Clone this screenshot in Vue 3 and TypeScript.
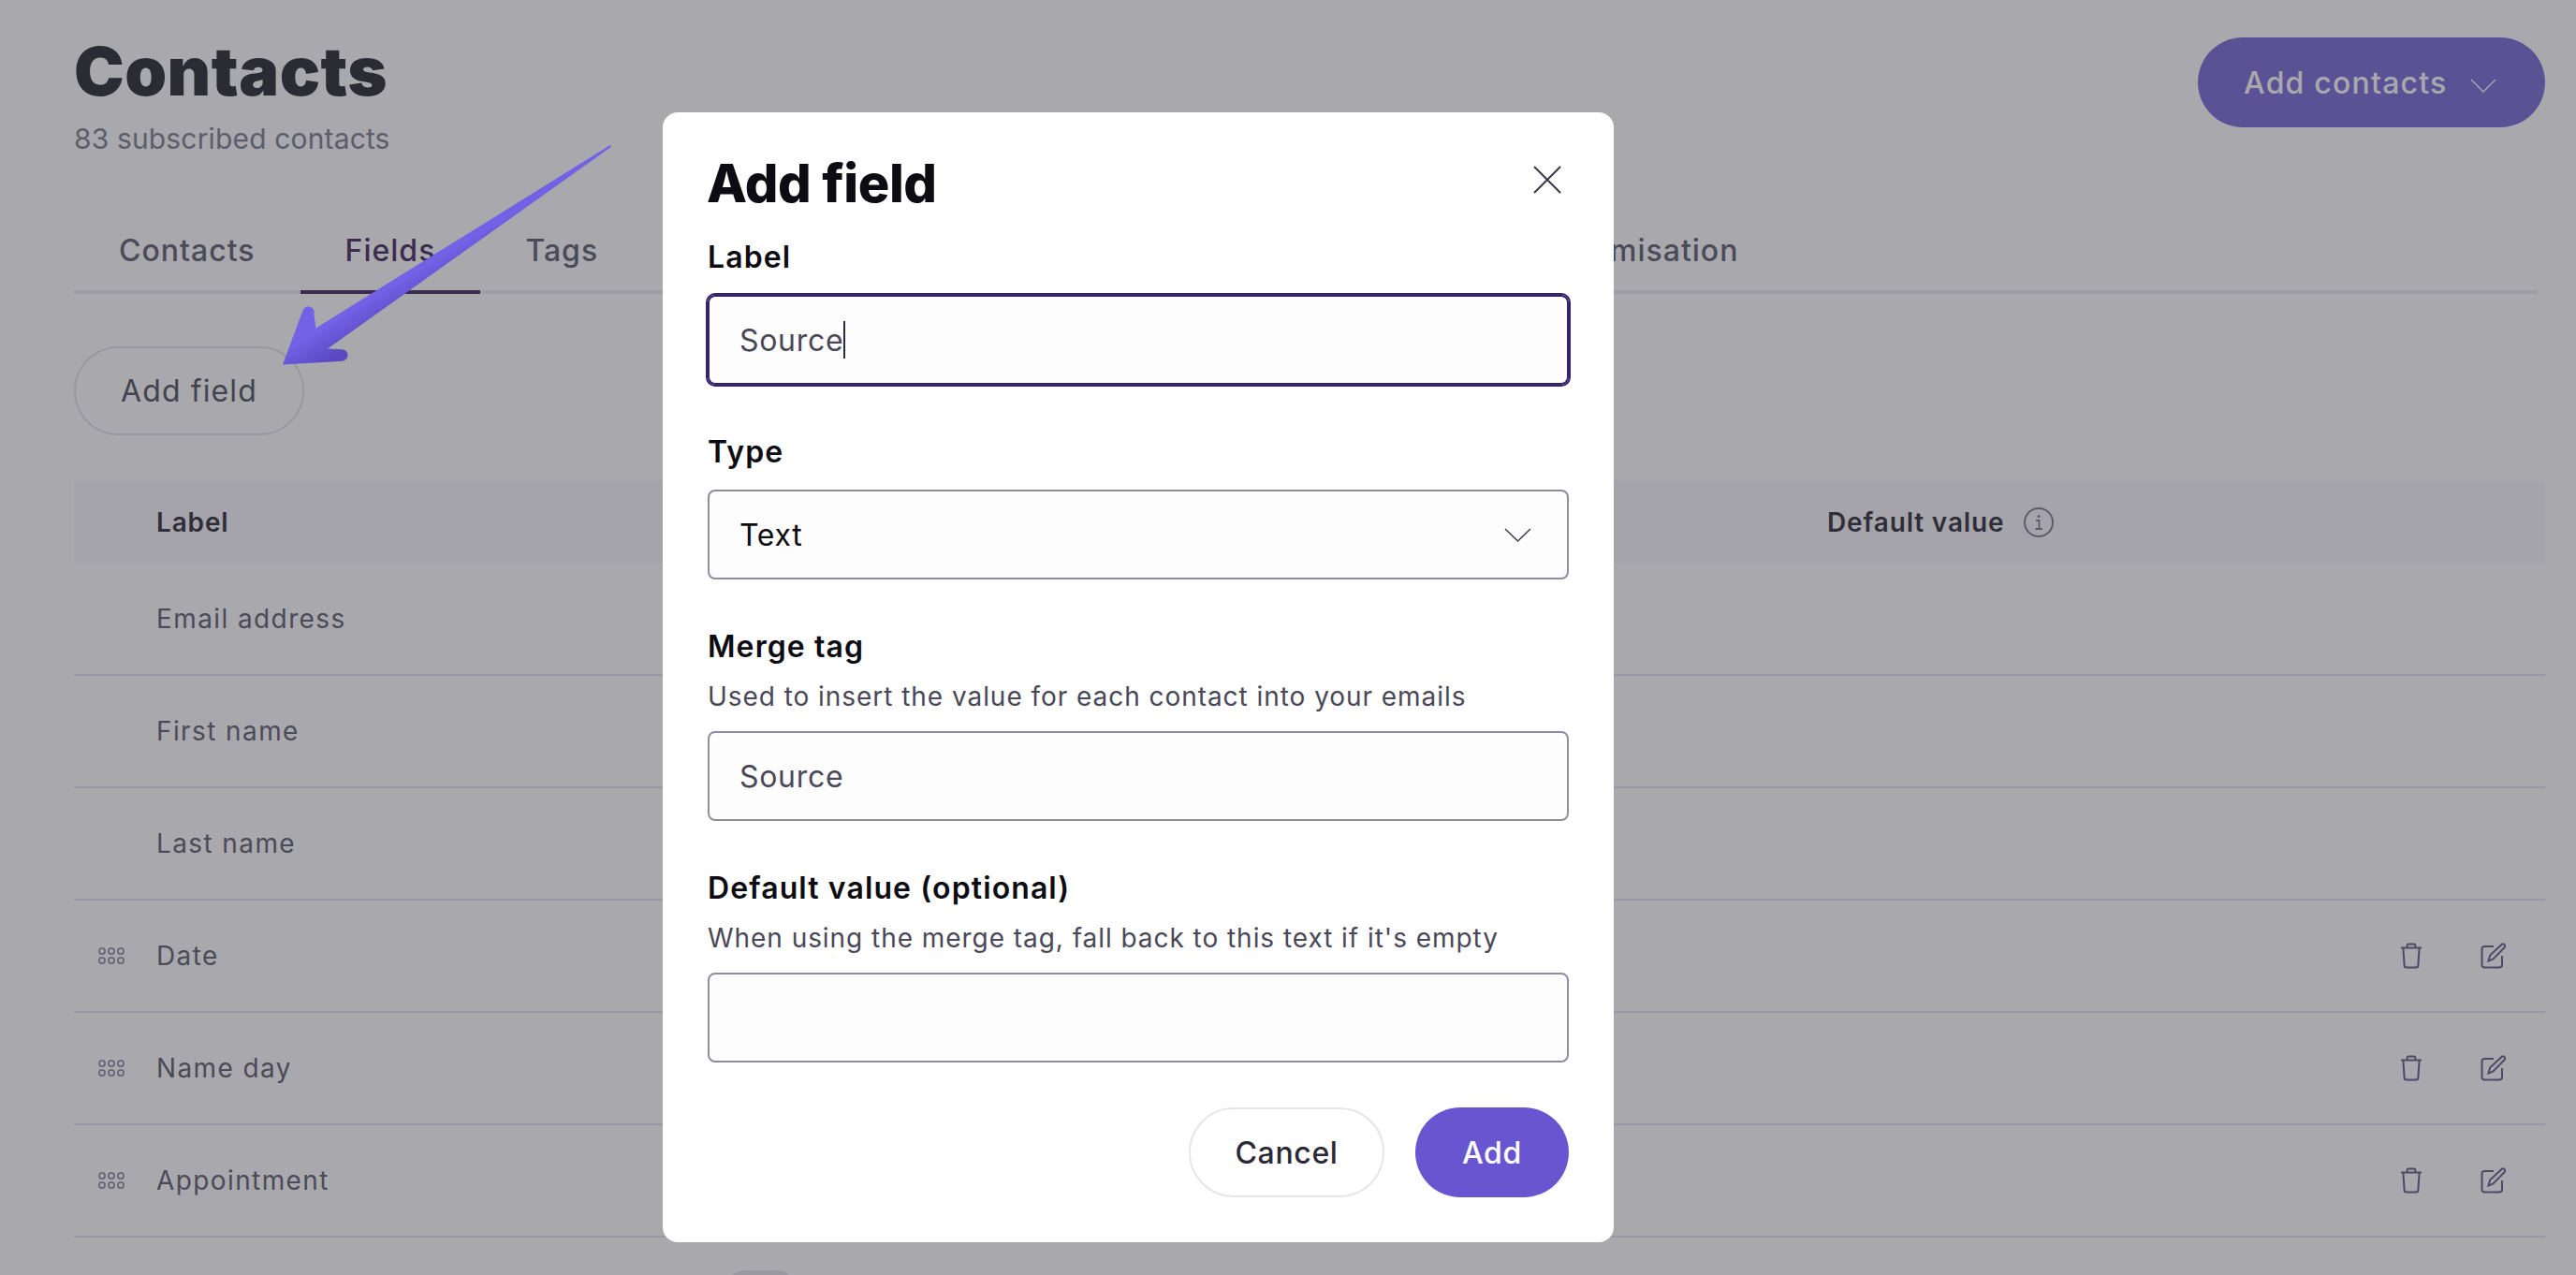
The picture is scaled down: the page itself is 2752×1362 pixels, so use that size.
<template>
  <div class="page">
    <header class="top">
      <div>
        <h1 class="title">Contacts</h1>
        <p class="subtitle">83 subscribed contacts</p>
      </div>
      <button class="add-contacts">
        Add contacts
        <svg class="chev" width="28" height="15" viewBox="0 0 28 15" fill="none">
          <path d="M1 1l13 13L27 1" stroke="currentColor" stroke-width="1.4" />
        </svg>
      </button>
    </header>

    <nav class="tabs">
      <a v-for="tab in tabs" :key="tab.name" class="tab" :class="tab.cls">{{ tab.name }}</a>
    </nav>

    <button class="add-field">Add field</button>

    <div class="table">
      <div class="thead">
        <span class="col-label">Label</span>
        <span class="col-default">Default value</span>
        <svg class="info" width="32" height="32" viewBox="0 0 32 32" fill="none">
          <circle cx="16" cy="16" r="15" stroke="currentColor" stroke-width="2" />
          <path d="M13 14h3.5v9M12.5 23h7.5" stroke="currentColor" stroke-width="1.8" />
          <circle cx="16" cy="9.5" r="1.6" fill="currentColor" />
        </svg>
      </div>
      <div v-for="row in rows" :key="row.label" class="row">
        <svg v-if="row.custom" class="grip" width="28" height="18" viewBox="0 0 28 18" fill="none">
          <g stroke="currentColor" stroke-width="1.6">
            <rect v-for="d in dots" :key="d.x + '-' + d.y" :x="d.x" :y="d.y" width="6" height="6" rx="2.6" />
          </g>
        </svg>
        <span class="row-label">{{ row.label }}</span>
        <template v-if="row.custom">
          <svg class="trash" width="24" height="28" viewBox="0 0 24 28" fill="none">
            <path
              d="M1 5.500h22M7.500 5.500V3.600C7.500 2.200 8.400 1.500 9.600 1.500h4.800c1.200 0 2.100.7 2.100 2.100v1.900M3.400 5.500l1.200 18.600c.1 1.600 1 2.400 2.400 2.400h10c1.400 0 2.300-.8 2.400-2.400l1.200-18.600"
              stroke="currentColor"
              stroke-width="2"
            />
          </svg>
          <svg class="edit" width="28" height="28" viewBox="0 0 28 28" fill="none">
            <path
              d="M14 4H4.500C2.600 4 1.500 5.100 1.500 7v16.500c0 1.900 1.100 3 3 3H20c1.900 0 3-1.100 3-3V14"
              stroke="currentColor"
              stroke-width="2"
            />
            <path
              d="M8.500 19.500l1.600-6L22.300 2.200c1-1 2.300-1 3.200-.1.900.9.900 2.200-.1 3.200L13.500 17.500z"
              stroke="currentColor"
              stroke-width="2"
            />
          </svg>
        </template>
      </div>
      <div class="row row-clip"><span class="toggle"></span></div>
    </div>
  </div>

  <div class="overlay">
    <div class="modal">
      <div class="modal-head">
        <h2 class="modal-title">Add field</h2>
        <svg class="close" width="30" height="30" viewBox="0 0 30 30" fill="none">
          <path d="M1 1l28 28M29 1L1 29" stroke="currentColor" stroke-width="2" />
        </svg>
      </div>

      <label class="label">Label</label>
      <div class="input focused">Source<span class="caret"></span></div>

      <label class="label spaced">Type</label>
      <div class="input select">
        Text
        <svg width="29" height="15" viewBox="0 0 29 15" fill="none">
          <path d="M1 1l13.500 13L28 1" stroke="currentColor" stroke-width="1.4" />
        </svg>
      </div>

      <label class="label spaced tight">Merge tag</label>
      <p class="hint">Used to insert the value for each contact into your emails</p>
      <div class="input">Source</div>

      <label class="label spaced tight">Default value (optional)</label>
      <p class="hint">When using the merge tag, fall back to this text if it's empty</p>
      <div class="input"></div>

      <div class="actions">
        <button class="btn cancel">Cancel</button>
        <button class="btn primary">Add</button>
      </div>
    </div>

    <svg class="arrow" width="360" height="240" viewBox="295 152 360 240">
      <defs>
        <linearGradient id="arrowFill" gradientUnits="userSpaceOnUse" x1="253" y1="406" x2="270" y2="434">
          <stop offset="0" stop-color="#7361e6" />
          <stop offset="1" stop-color="#5b48c2" />
        </linearGradient>
      </defs>
      <path
        d="M651 155.500c1.500-.6 2.200 1 1 2L350 372.500l15.500.8c3.800.3 6.300 3 6 6.500-.3 3.300-2.800 5.700-6.200 5.900L302 389.500l21.500-57.800c1.300-3.300 4.800-4.900 8.100-3.800 3.400 1.200 5 4.500 3.800 7.900L337.500 350.500z"
        fill="url(#arrowFill)"
      />
    </svg>
  </div>
</template>

<script setup lang="ts">
interface Row {
  label: string
  custom: boolean
}

const tabs = [
  { name: 'Contacts', cls: '' },
  { name: 'Fields', cls: 'active' },
  { name: 'Tags', cls: '' },
  { name: 'Customisation', cls: 'far' },
]

const rows: Row[] = [
  { label: 'Email address', custom: false },
  { label: 'First name', custom: false },
  { label: 'Last name', custom: false },
  { label: 'Date', custom: true },
  { label: 'Name day', custom: true },
  { label: 'Appointment', custom: true },
]

const dots = [1, 11, 21].flatMap((x) => [1, 11].map((y) => ({ x, y })))
</script>

<style>
html,
body {
  height: 100%;
  margin: 0;
  overflow: hidden;
  background: #fff;
}
</style>

<style scoped>
.page {
  height: 1362px;
  overflow: hidden;
  box-sizing: border-box;
  padding: 0 33px 0 79px;
  font-family: Inter, "Liberation Sans", sans-serif;
  color: #4a4858;
}
.top {
  display: flex;
  justify-content: space-between;
  align-items: flex-start;
}
.title {
  margin: 32px 0 0;
  font-size: 72px;
  line-height: 88px;
  font-weight: 900;
  letter-spacing: 0.4px;
  color: #0b0a10;
}
.subtitle {
  margin: 8px 0 0;
  font-size: 30px;
  line-height: 40px;
  letter-spacing: 0.15px;
  color: #6e6c80;
}
.add-contacts {
  margin-top: 40px;
  width: 371px;
  height: 96px;
  border: 0;
  border-radius: 48px;
  background: #6955d0;
  color: #fff;
  font: 500 32px Inter, "Liberation Sans", sans-serif;
  letter-spacing: 1.2px;
  display: flex;
  align-items: center;
  gap: 24px;
  padding: 0 0 0 49px;
}
.chev {
  margin-top: 6px;
}
.tabs {
  display: flex;
  margin: 52px 8px 0 0;
  border-bottom: 4px solid #edecf0;
}
.tab {
  padding: 28px 48px 22px;
  margin-bottom: -4px;
  border-bottom: 4px solid transparent;
  font-size: 32px;
  line-height: 40px;
  font-weight: 500;
  letter-spacing: 1px;
  color: #4a4858;
}
.tab.active {
  color: #2d0848;
  border-bottom-color: #2d0848;
}
.tab.far {
  margin-left: 890px;
}
.add-field {
  display: block;
  margin-top: 56px;
  width: 246px;
  height: 95px;
  border: 2px solid #dfdee5;
  border-radius: 48px;
  background: #fff;
  color: #3a3848;
  font: 400 32px Inter, "Liberation Sans", sans-serif;
  letter-spacing: 1.1px;
  padding: 0;
}
.table {
  margin-top: 49px;
}
.thead {
  height: 88px;
  display: flex;
  align-items: center;
  padding-left: 88px;
  background: #f9f8f9;
  font-size: 28px;
  font-weight: 600;
  letter-spacing: 0.85px;
  color: #12111a;
}
.col-label {
  width: 1785px;
}
.info {
  margin-left: 21px;
  color: #6a6880;
}
.row {
  height: 120px;
  box-sizing: border-box;
  display: flex;
  align-items: center;
  position: relative;
  padding-left: 88px;
  border-bottom: 2px solid #e3e2e9;
}
.grip {
  position: absolute;
  left: 26px;
  top: 50px;
  color: #73718e;
}
.row-label {
  font-size: 28px;
  letter-spacing: 1.4px;
  color: #4a4858;
}
.trash {
  margin-left: auto;
  color: #4d4878;
}
.edit {
  margin-left: 62px;
  margin-right: 41px;
  color: #4d4878;
}
.row-clip {
  border: 0;
  align-items: flex-start;
}
.toggle {
  margin: 35px 0 0 609px;
  width: 74px;
  height: 40px;
  border-radius: 20px;
  background: #e2e1e4;
}

.overlay {
  position: fixed;
  inset: 0;
  box-sizing: border-box;
  padding: 120px 0 0 708px;
  background: rgba(77, 77, 88, 0.49);
  font-family: Inter, "Liberation Sans", sans-serif;
}
.modal {
  width: 1016px;
  height: 1207px;
  box-sizing: border-box;
  padding: 40px 48px 0;
  border-radius: 16px;
  background: #fff;
}
.modal-head {
  display: flex;
  justify-content: space-between;
  align-items: center;
  height: 72px;
}
.modal-title {
  margin: 0 0 0 -1px;
  font-size: 56px;
  line-height: 72px;
  font-weight: 800;
  letter-spacing: -0.45px;
  color: #0d0c12;
}
.close {
  margin-right: 8px;
  margin-top: -8px;
  color: #3a3848;
}
.label {
  display: block;
  margin-top: 23px;
  margin-bottom: 20px;
  font-size: 32px;
  line-height: 40px;
  font-weight: 600;
  letter-spacing: 1.1px;
  color: #0d0c12;
}
.label.spaced {
  margin-top: 52px;
}
.label.tight {
  margin-bottom: 15px;
}
.hint {
  margin: 0 0 19px;
  font-size: 28px;
  line-height: 36px;
  letter-spacing: 0.95px;
  color: #4a4858;
}
.input {
  height: 96px;
  box-sizing: border-box;
  display: flex;
  align-items: center;
  padding: 0 32px;
  border: 2px solid #8f8da1;
  border-radius: 8px;
  background: #fdfdfe;
  font-size: 32px;
  letter-spacing: 0.7px;
  color: #4a4858;
}
.input.focused {
  border-color: #37236b;
  outline: 2px solid #37236b;
}
.caret {
  width: 2px;
  height: 40px;
  background: #2d2a40;
}
.select {
  justify-content: space-between;
  color: #0d0c12;
}
.select svg {
  margin-right: 6px;
  color: #3a3848;
}
.actions {
  display: flex;
  justify-content: flex-end;
  gap: 33px;
  margin-top: 48px;
}
.btn {
  height: 96px;
  border-radius: 48px;
  font: 500 32px Inter, "Liberation Sans", sans-serif;
  letter-spacing: 0.64px;
  padding: 0;
}
.cancel {
  width: 209px;
  background: #fff;
  border: 2px solid #e5e5ee;
  color: #2b2938;
}
.primary {
  width: 164px;
  border: 0;
  background: #6955d0;
  color: #fff;
}
.arrow {
  position: absolute;
  left: 295px;
  top: 152px;
}
</style>
